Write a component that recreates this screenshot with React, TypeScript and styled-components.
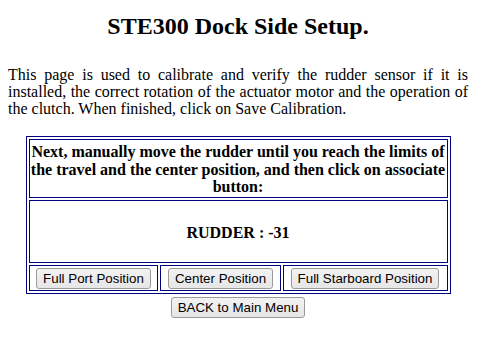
import React from "react";
import styled, { createGlobalStyle } from "styled-components";

const Global = createGlobalStyle`
  html, body { background: #ffffff; }
  body {
    margin: 8px;
    font-family: "Liberation Serif", "Times New Roman", serif;
    font-size: 16px;
    color: #000;
  }
`;

const Page = styled.div`
  width: 460px;
`;

const Title = styled.h2`
  margin: 5px 0 26px;
  text-align: center;
  font-size: 24px;
  font-weight: bold;
`;

const Intro = styled.p`
  margin: 0 0 19px;
  text-align: justify;
  line-height: 17px;
`;

const Grid = styled.table`
  width: 425px;
  margin: 0 auto;
  border: 1px solid #000080;
  border-spacing: 2px;
`;

const Cell = styled.td<{ $h?: number }>`
  border: 1px solid #000080;
  padding: 1px;
  text-align: center;
  vertical-align: middle;
  height: ${(p) => (p.$h ? `${p.$h}px` : "auto")};
`;

const Prompt = styled.div`
  font-weight: bold;
  line-height: 17.5px;
  padding-top: 2px;
`;

const Reading = styled.div`
  font-weight: bold;
  padding-top: 3px;
`;

const Button = styled.button`
  font-family: Arial, "Liberation Sans", sans-serif;
  font-size: 13.33px;
  color: #000;
  background: linear-gradient(#f2f2f2, #e6e6e6);
  border: 1px solid #9a9a9a;
  border-radius: 3px;
  padding: 2px 6px;
  height: 21px;
  margin: 0;
  white-space: nowrap;
  cursor: pointer;
`;

const ButtonSlot = styled.div`
  display: flex;
  justify-content: center;
  padding: 1px 4px 0;
`;

const Footer = styled.div`
  display: flex;
  justify-content: center;
  margin-top: 3px;
`;

export default function App() {
  return (
    <>
      <Global />
      <Page>
        <Title>STE300 Dock Side Setup.</Title>
        <Intro>
          This page is used to calibrate and verify the rudder sensor if it is
          installed, the correct rotation of the actuator motor and the
          operation of the clutch. When finished, click on Save Calibration.
        </Intro>
        <Grid>
          <tbody>
            <tr>
              <Cell colSpan={3}>
                <Prompt>
                  Next, manually move the rudder until you reach the limits of
                  the travel and the center position, and then click on
                  associate button:
                </Prompt>
              </Cell>
            </tr>
            <tr>
              <Cell colSpan={3} $h={59}>
                <Reading>RUDDER : -31</Reading>
              </Cell>
            </tr>
            <tr>
              <Cell>
                <ButtonSlot>
                  <Button>Full Port Position</Button>
                </ButtonSlot>
              </Cell>
              <Cell>
                <ButtonSlot>
                  <Button>Center Position</Button>
                </ButtonSlot>
              </Cell>
              <Cell>
                <ButtonSlot>
                  <Button>Full Starboard Position</Button>
                </ButtonSlot>
              </Cell>
            </tr>
          </tbody>
        </Grid>
        <Footer>
          <Button>BACK to Main Menu</Button>
        </Footer>
      </Page>
    </>
  );
}
